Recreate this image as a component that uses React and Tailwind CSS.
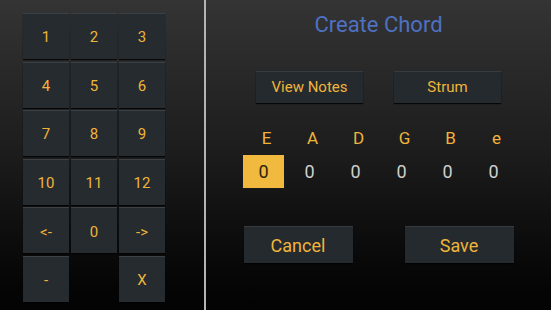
import React, { useState } from 'react';

const keys = ['1', '2', '3', '4', '5', '6', '7', '8', '9', '10', '11', '12', '<-', '0', '->', '-', '', 'X'];
const strings = ['E', 'A', 'D', 'G', 'B', 'e'];

function Key({ label }) {
  if (!label) return <div className="w-[46px] h-[46px]" />;
  return (
    <button className="w-[46px] h-[46px] pt-[2px] bg-[#262b2f] border-t border-t-[#3c4146] shadow-[0_1px_1px_rgba(0,0,0,0.8)] text-[#f0b43a] text-[15px] flex items-center justify-center">
      {label}
    </button>
  );
}

function ActionButton({ children, className }) {
  return (
    <button
      className={
        'bg-[#252a2e] border-t border-t-[#363b40] shadow-[0_1px_1px_rgba(0,0,0,0.8)] text-[#f0b43a] flex items-center justify-center ' +
        className
      }
    >
      {children}
    </button>
  );
}

export default function App() {
  const [selected, setSelected] = useState(0);
  const frets = [0, 0, 0, 0, 0, 0];

  return (
    <div
      className="w-[551px] h-[310px] flex overflow-hidden bg-gradient-to-b from-[#343434] via-[#1c1c1c] to-[#030303]"
      style={{ fontFamily: 'Roboto, "Noto Sans", sans-serif' }}
    >
      {/* keypad */}
      <div className="w-[204px] pl-[23px] pt-[13px]">
        <div className="grid grid-cols-[46px_46px_46px] gap-x-[2px] gap-y-[2.6px]">
          {keys.map((k, i) => (
            <Key key={i} label={k} />
          ))}
        </div>
      </div>

      <div className="w-[2px] h-full bg-[#b4b4b4]" />

      {/* chord editor */}
      <div className="flex-1 flex flex-col items-center">
        <h1 className="mt-[11px] text-[22px] leading-[28px] text-[#4e71c3]">Create Chord</h1>

        <div className="mt-[32px] flex gap-[31px]">
          <ActionButton className="w-[107px] h-[32px] text-[15px]">View Notes</ActionButton>
          <ActionButton className="w-[107px] h-[32px] text-[15px]">Strum</ActionButton>
        </div>

        <div className="mt-[25px] flex pl-[6px]">
          {strings.map((s) => (
            <div key={s} className="w-[46px] text-center text-[17px] leading-[20px] text-[#f0b43a]">
              {s}
            </div>
          ))}
        </div>

        <div className="mt-[6px] flex">
          {frets.map((f, i) => (
            <div key={i} className="w-[46px] flex justify-center">
              <button
                onClick={() => setSelected(i)}
                className={
                  'w-[43px] h-[35px] text-[18px] flex items-center justify-center ' +
                  (selected === i ? 'bg-[#f2b93f] text-[#2a2410] border border-[#1a1a1a]' : 'text-[#cfcfcf]')
                }
              >
                {f}
              </button>
            </div>
          ))}
        </div>

        <div className="mt-[37px] flex gap-[52px]">
          <ActionButton className="w-[109px] h-[37px] text-[18px]">Cancel</ActionButton>
          <ActionButton className="w-[109px] h-[37px] text-[18px]">Save</ActionButton>
        </div>
      </div>
    </div>
  );
}
